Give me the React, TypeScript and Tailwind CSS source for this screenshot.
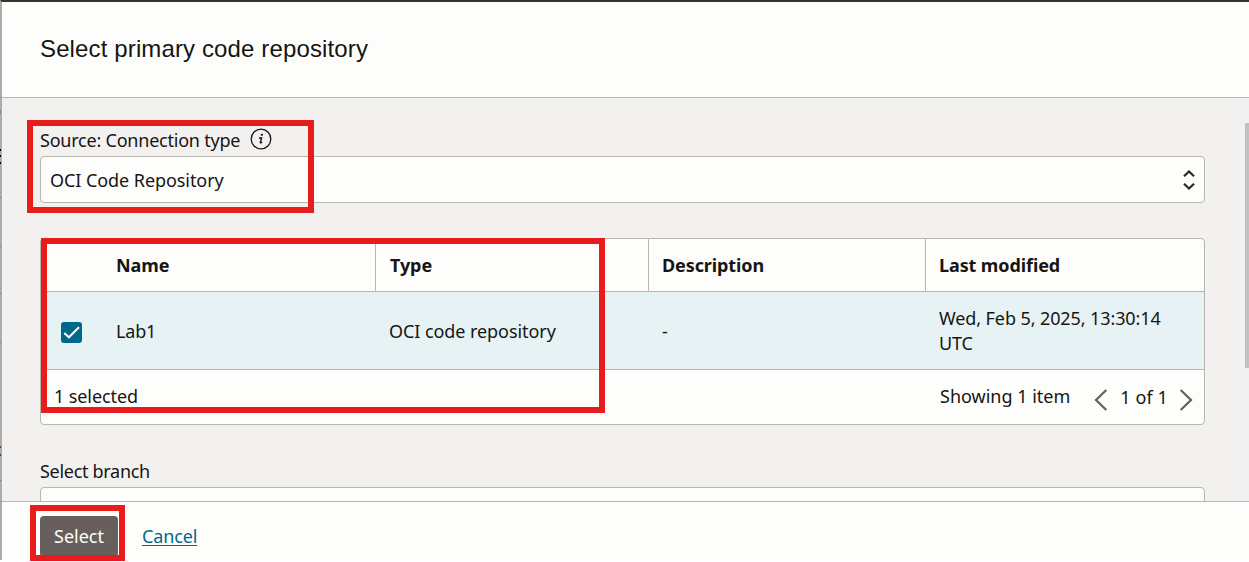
import React from "react";

const columns = [
  { label: "Name", cell: "pl-[75px] w-[335px]", text: "tracking-[-0.1px]" },
  { label: "Type", cell: "pl-[14px] w-[273px]", text: "tracking-[-0.1px]" },
  { label: "Description", cell: "pl-[13px] w-[277px]", text: "tracking-[-0.1px]" },
  { label: "Last modified", cell: "pl-[13px] flex-1 border-r-0", text: "tracking-[-0.1px]" },
];

const edgeMarks = [
  "top-[97px] h-px bg-[#8b8b8b]",
  "top-[110px] h-[4px] bg-[#858585]",
  "top-[149px] h-[2px] bg-black",
  "top-[155px] h-[2px] bg-black",
  "top-[162px] h-[2px] bg-black",
  "top-[197px] h-px bg-[#7d7d7d]",
  "top-[246px] h-px bg-[#7d7d7d]",
  "top-[293px] h-px bg-[#7d7d7d]",
  "top-[342px] h-px bg-[#7d7d7d]",
  "top-[446px] h-px bg-[#8a4a18]",
  "top-[447px] h-px bg-[#153e78]",
  "top-[454px] h-px bg-[#153e78]",
  "top-[455px] h-px bg-[#6b3514]",
  "top-[480px] h-px bg-[#7d7d7d]",
  "top-[501px] h-px bg-[#8b8b8b]",
];

function InfoIcon() {
  return (
    <svg width="22" height="22" viewBox="0 0 22 22" fill="none">
      <circle cx="11" cy="11" r="9.8" stroke="#161513" strokeWidth="1.3" />
      <circle cx="11.9" cy="6.8" r="1.15" fill="#161513" />
      <path d="M9 10h2.6l-1.3 4.4c-.2.7.7.6 1.9-.3" stroke="#161513" strokeWidth="1.4" />
    </svg>
  );
}

function SortArrows() {
  return (
    <svg width="12" height="22" viewBox="0 0 12 22" fill="none" stroke="#2b2927" strokeWidth="2.2">
      <path d="M1 7.2L6 2.4l5 4.8M1 14.8l5 4.8 5-4.8" />
    </svg>
  );
}

function Chevron({ dir }: { dir: "left" | "right" }) {
  return (
    <svg width="14" height="22" viewBox="0 0 14 22" fill="none" stroke="#665f5b" strokeWidth="2.2">
      <path d={dir === "left" ? "M12.3 1L2 11l10.3 10" : "M1.7 1L12 11 1.7 21"} />
    </svg>
  );
}

export default function App() {
  return (
    <div className="relative h-[562px] w-[1249px] overflow-hidden bg-white font-['Noto_Sans',sans-serif] text-[18px] leading-[25px] text-[#161513]">
      <div className="flex h-[560px] flex-col border-t-2 border-l-2 border-t-[#3a322e] border-l-[#acacac] bg-[#fdfdfb]">
        <header className="flex h-24 shrink-0 items-center border-b border-[#b9b5af] pb-[2px] pl-[38px]">
          <h1 className="font-['Liberation_Sans',sans-serif] text-[24px] leading-8 tracking-[0.13px]">Select primary code repository</h1>
        </header>

        <main className="relative h-[403px] shrink-0 overflow-hidden bg-[#f3f1f0] pl-[38px] pt-[29px]">
          <div className="flex h-[29px] items-start">
            <label className="whitespace-nowrap pt-px tracking-[-0.22px]">Source: Connection type</label>
            <span className="ml-[10px] mt-px"><InfoIcon /></span>
          </div>
          <div className="flex h-[47px] w-[1165px] items-center justify-between rounded-[4px] border border-[#b9b5af] bg-[#fdfdfb] pl-[9px] pr-[9px]">
            <span className="pt-[2px] tracking-[-0.07px]">OCI Code Repository</span>
            <SortArrows />
          </div>

          <div className="mt-[35px] h-[187px] w-[1165px] overflow-hidden rounded-[4px] border border-[#b9b5af] bg-[#fdfdfb]">
            <div className="flex h-[53px] border-b border-[#b9b5af] font-bold">
              {columns.map((c) => (
                <div key={c.label} className={`flex items-center border-r border-[#b9b5af] ${c.cell}`}>
                  <span className={c.text}>{c.label}</span>
                </div>
              ))}
            </div>
            <div className="flex h-[78px] items-center border-b border-[#b9b5af] bg-[#e6f2f4]">
              <div className="flex w-[335px] items-center pl-5">
                <svg width="21" height="21" viewBox="0 0 21 21" fill="none" className="mt-[3px]">
                  <rect width="21" height="21" rx="3" fill="#00688c" />
                  <path d="M3.2 11l4.7 4.3L18 5.2" stroke="#fff" strokeWidth="2" />
                </svg>
                <span className="ml-[34px] pt-[2px] tracking-[-0.2px]">Lab1</span>
              </div>
              <span className="w-[273px] pl-[13px] pt-[2px] tracking-[-0.07px]">OCI code repository</span>
              <span className="w-[277px] pl-[13px] pt-[2px]">-</span>
              <span className="whitespace-nowrap pl-[13px] tracking-[-0.1px]">Wed, Feb 5, 2025, 13:30:14<br />UTC</span>
            </div>
            <div className="flex h-[54px] items-center pl-[13px]">
              <span className="pb-[2px] tracking-[-0.1px]">1 selected</span>
              <div className="ml-auto flex items-center pr-[11px]">
                <span className="mr-[24px] pb-[2px]">Showing 1 item</span>
                <span className="mt-[6px]"><Chevron dir="left" /></span>
                <span className="ml-[12px] mr-[11px] tracking-[0.1px]">1 of 1</span>
                <span className="mt-[6px]"><Chevron dir="right" /></span>
              </div>
            </div>
          </div>

          <div className="mt-[34px] h-[28px] tracking-[-0.3px]">Select branch</div>
          <div className="h-[47px] w-[1165px] rounded-[4px] border border-[#b9b5af] bg-[#fdfdfb]" />
          <div className="absolute right-0 top-0 h-full w-[6px] bg-[#f1f1f1] pl-[2px] pt-[25px]">
            <div className="h-[245px] bg-[#c1c1c1]" />
          </div>
        </main>

        <footer className="flex flex-1 items-start border-t border-[#b9b5af] pl-[38px] pt-[14px]">
          <button className="h-[41px] w-[78px] rounded-[4px] bg-[#665f5b] text-white">Select</button>
          <a href="#" className="ml-6 mt-[8px] tracking-[-0.15px] text-[#00688c] underline decoration-1 underline-offset-2">Cancel</a>
        </footer>
      </div>

      {edgeMarks.map((m) => (
        <i key={m} className={`absolute left-0 w-px ${m}`} />
      ))}

      <div className="absolute left-[27px] top-[120px] h-[93px] w-[287px] border-[6px] border-[#e81c1c]" />
      <div className="absolute left-[41px] top-[238px] h-[175px] w-[564px] border-[6px] border-[#e81c1c]" />
      <div className="absolute left-[30px] top-[505px] h-[56px] w-[95px] border-[6px] border-[#e81c1c]" />
    </div>
  );
}
